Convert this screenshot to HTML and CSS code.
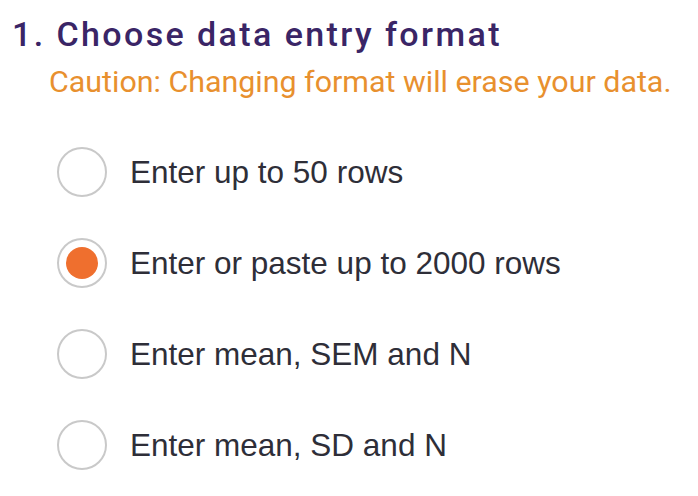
FILE: index.html
```html
<!DOCTYPE html>
<html>
<head>
<meta charset="utf-8">
<link rel="stylesheet" href="styles.css">
</head>
<body>
<section class="panel">
  <h1 class="title">1. Choose data entry format</h1>
  <p class="caution">Caution: Changing format will erase your data.</p>
  <ul class="options">
    <li class="option"><span class="radio"></span><span class="label">Enter up to 50 rows</span></li>
    <li class="option"><span class="radio checked"></span><span class="label">Enter or paste up to 2000 rows</span></li>
    <li class="option"><span class="radio"></span><span class="label">Enter mean, SEM and N</span></li>
    <li class="option"><span class="radio"></span><span class="label">Enter mean, SD and N</span></li>
  </ul>
</section>
</body>
</html>
```
FILE: styles.css
```css
html, body {
  margin: 0;
  padding: 0;
  background: #ffffff;
}
.panel {
  padding: 12px 0 0 12px;
}
.title {
  margin: 0;
  font-family: "Roboto", "Liberation Sans", sans-serif;
  font-weight: 500;
  font-size: 34px;
  line-height: 44px;
  letter-spacing: 2.4px;
  color: #3a2566;
}
.caution {
  margin: 9px 0 0 37px;
  font-family: "Roboto", "Liberation Sans", sans-serif;
  font-weight: 400;
  font-size: 30.4px;
  line-height: 34px;
  color: #e8902e;
}
.options {
  list-style: none;
  margin: 48px 0 0 45px;
  padding: 0;
  display: flex;
  flex-direction: column;
  gap: 41px;
}
.option {
  display: flex;
  align-items: center;
  gap: 23px;
  height: 50px;
}
.radio {
  box-sizing: border-box;
  width: 50px;
  height: 50px;
  border: 2px solid #c9c9c9;
  border-radius: 50%;
  display: flex;
  align-items: center;
  justify-content: center;
  flex: none;
}
.radio.checked::after {
  content: "";
  width: 32px;
  height: 32px;
  border-radius: 50%;
  background: #ef6f2e;
}
.label {
  font-family: "Liberation Sans", Arial, sans-serif;
  font-size: 31.5px;
  color: #2e2e38;
}
```
